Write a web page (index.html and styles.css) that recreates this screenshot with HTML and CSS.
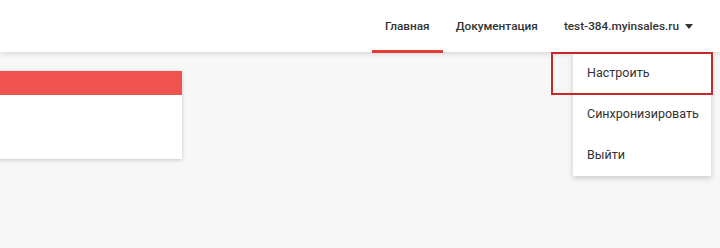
FILE: index.html
```html
<!DOCTYPE html>
<html lang="ru">
<head>
    <meta charset="UTF-8">
    <meta name="viewport" content="width=device-width, initial-scale=1.0">
    <title>Настройки</title>
    <link rel="stylesheet" href="styles.css">
</head>
<body>
    <header class="topbar">
        <nav class="nav">
            <a class="nav-item active" href="#">Главная</a>
            <a class="nav-item" href="#">Документация</a>
            <div class="nav-item user">
                test-384.myinsales.ru
                <span class="caret"></span>
            </div>
        </nav>
        <ul class="dropdown">
            <li class="highlight">Настроить</li>
            <li>Синхронизировать</li>
            <li>Выйти</li>
        </ul>
    </header>
    <main class="content">
        <div class="card">
            <div class="card-head"></div>
            <div class="card-body"></div>
        </div>
    </main>
</body>
</html>
```

FILE: styles.css
```css
body {
    margin: 0;
    font-family: Roboto, "Liberation Sans", Arial, sans-serif;
    background-color: #f7f7f7;
    color: #333;
    height: 248px;
    overflow: hidden;
}
.topbar {
    position: relative;
    height: 52px;
    background-color: #fff;
    box-shadow: 0 2px 5px rgba(0, 0, 0, 0.12);
    display: flex;
    justify-content: flex-end;
    padding-right: 14px;
    z-index: 2;
}
.nav {
    display: flex;
    height: 100%;
}
.nav-item {
    display: flex;
    align-items: center;
    padding: 0 13px;
    font-size: 11.8px;
    font-weight: 500;
    color: #333;
    text-decoration: none;
    position: relative;
}
.nav-item.active::after {
    content: "";
    position: absolute;
    left: 0;
    right: 0;
    bottom: -1px;
    height: 3px;
    background-color: #e53935;
}
.caret {
    display: inline-block;
    margin-left: 6px;
    border-left: 4px solid transparent;
    border-right: 4px solid transparent;
    border-top: 5px solid #333;
}
.dropdown {
    position: absolute;
    top: 52px;
    right: 9px;
    width: 138px;
    margin: 0;
    padding: 0;
    list-style: none;
    background-color: #fff;
    box-shadow: 0 2px 6px rgba(0, 0, 0, 0.2);
}
.dropdown li {
    height: 41px;
    line-height: 41px;
    padding-left: 14px;
    font-size: 12.5px;
    color: #333;
    white-space: nowrap;
    position: relative;
}
.dropdown li:last-child {
    height: 42px;
}
.dropdown .highlight::before {
    content: "";
    position: absolute;
    top: 0;
    left: -22px;
    right: -2px;
    height: 43px;
    border: 2px solid #c62828;
    box-sizing: border-box;
}
.content {
    padding-top: 19px;
}
.card {
    width: 200px;
    margin-left: -18px;
    background-color: #fff;
    box-shadow: 0 1px 4px rgba(0, 0, 0, 0.2);
}
.card-head {
    height: 24px;
    background-color: #ef5350;
}
.card-body {
    height: 64px;
}
```
